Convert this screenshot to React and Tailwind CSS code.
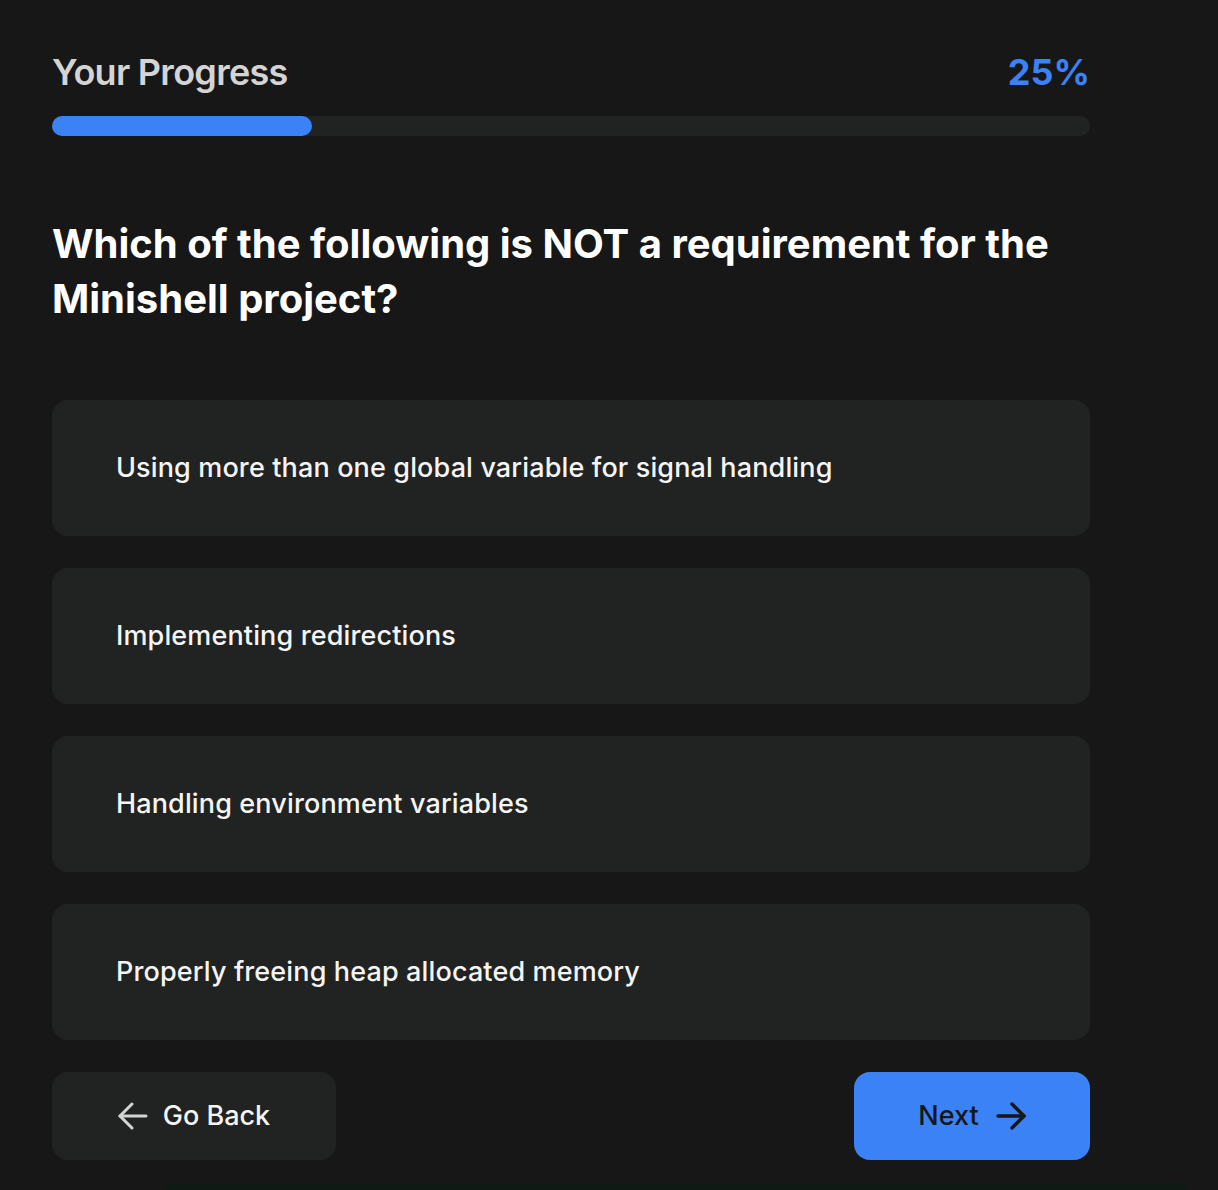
import React from "react";

const options = [
  "Using more than one global variable for signal handling",
  "Implementing redirections",
  "Handling environment variables",
  "Properly freeing heap allocated memory",
];

function LeftArrow() {
  return (
    <svg width="30" height="28" viewBox="0 0 30 28" fill="none" stroke="#d4d4d4" strokeWidth="3" strokeLinecap="round" strokeLinejoin="round">
      <path d="M28 14H2" />
      <path d="M14 2L2 14L14 26" />
    </svg>
  );
}

function RightArrow() {
  return (
    <svg width="30" height="28" viewBox="0 0 30 28" fill="none" stroke="#171717" strokeWidth="3.5" strokeLinecap="round" strokeLinejoin="round">
      <path d="M2 14H28" />
      <path d="M16 2L28 14L16 26" />
    </svg>
  );
}

export default function App() {
  return (
    <div
      className="min-h-[1190px] w-full overflow-hidden bg-[#171717] text-white"
      style={{ fontFamily: 'Inter, "Noto Sans", sans-serif' }}
    >
      <div className="w-[1038px] ml-[52px] pt-[52px]">
        <div className="flex items-center justify-between h-[40px]">
          <span className="text-[36px] font-semibold text-[#d4d4d4] tracking-[-0.02em]">Your Progress</span>
          <span className="text-[36px] font-bold text-[#3b82f6]">25%</span>
        </div>
        <div className="mt-[24px] h-[20px] w-full rounded-full bg-[#212322]">
          <div className="h-full rounded-full bg-[#3b82f6]" style={{ width: "25%" }} />
        </div>
        <h1 className="mt-[80px] text-[40px] font-bold leading-[55px] text-white">
          Which of the following is NOT a requirement for the Minishell project?
        </h1>
        <div className="mt-[74px] flex flex-col gap-[32px]">
          {options.map((o) => (
            <button
              key={o}
              className="h-[136px] w-full rounded-2xl bg-[#212322] pl-[64px] text-left text-[27px] font-medium tracking-[0.005em] text-[#f5f5f5]"
            >
              {o}
            </button>
          ))}
        </div>
        <div className="mt-[32px] flex items-center justify-between">
          <button className="flex h-[88px] w-[284px] items-center justify-center gap-[15px] rounded-2xl bg-[#212322] text-[27px] font-medium text-[#f5f5f5]">
            <LeftArrow />
            <span>Go Back</span>
          </button>
          <button className="flex h-[88px] w-[236px] items-center justify-center gap-[17px] rounded-2xl bg-[#3b82f6] text-[27px] font-medium text-[#171717]">
            <span>Next</span>
            <RightArrow />
          </button>
        </div>
      </div>
      <div className="mt-[23px] ml-[163px] h-[20px] w-[1026px] rounded-t-xl bg-[#0f1a14]" />
    </div>
  );
}
